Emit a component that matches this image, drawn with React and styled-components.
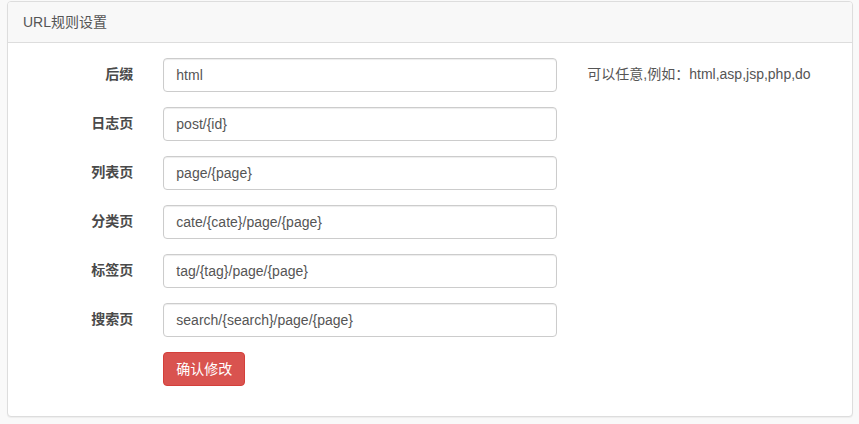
import React from "react";
import styled, { createGlobalStyle } from "styled-components";

const Global = createGlobalStyle`
  html, body { margin: 0; padding: 0; background: #f9f9f9; }
  body {
    font-family: "Liberation Sans", Arial, "Noto Sans CJK SC", sans-serif;
    font-size: 14px;
    line-height: 1.42857;
    color: #333;
  }
  * { box-sizing: border-box; }
`;

const Page = styled.div`
  padding: 1px 6px 7px 7px;
`;

const Panel = styled.div`
  background: #fff;
  border: 1px solid #ddd;
  border-radius: 4px;
  box-shadow: 0 1px 1px rgba(0, 0, 0, 0.05);
`;

const PanelHeading = styled.div`
  padding: 10px 15px;
  background: #f8f8f8;
  border-bottom: 1px solid #ddd;
  border-radius: 3px 3px 0 0;
  color: #555;
  font-size: 14px;
  line-height: 20px;
`;

const PanelBody = styled.div`
  padding: 15px;
`;

const Row = styled.div`
  display: grid;
  grid-template-columns: 2fr 6fr 4fr;
  margin: 0 -18px 15px -16px;
`;

const Label = styled.label`
  padding: 7px 15px 0;
  text-align: right;
  font-weight: bold;
  color: #4a4a4a;
`;

const Cell = styled.div`
  padding: 0 15px;
`;

const Input = styled.input`
  display: block;
  width: 100%;
  height: 34px;
  padding: 6px 12px;
  font-family: inherit;
  font-size: 14px;
  color: #555;
  background: #fff;
  border: 1px solid #ccc;
  border-radius: 4px;
  box-shadow: inset 0 1px 1px rgba(0, 0, 0, 0.075);
  outline: none;
`;

const Help = styled.div`
  padding: 7px 15px 0;
  color: #555;
`;

const Button = styled.button`
  height: 34px;
  padding: 6px 12px;
  font-family: inherit;
  font-size: 14px;
  line-height: 20px;
  color: #fff;
  background: #d9534f;
  border: 1px solid #d43f3a;
  border-radius: 4px;
  cursor: pointer;
`;

const fields = [
  { label: "后缀", value: "html", help: "可以任意,例如：html,asp,jsp,php,do" },
  { label: "日志页", value: "post/{id}" },
  { label: "列表页", value: "page/{page}" },
  { label: "分类页", value: "cate/{cate}/page/{page}" },
  { label: "标签页", value: "tag/{tag}/page/{page}" },
  { label: "搜索页", value: "search/{search}/page/{page}" },
];

export default function App() {
  return (
    <Page>
      <Global />
      <Panel>
        <PanelHeading>URL规则设置</PanelHeading>
        <PanelBody>
          {fields.map((f) => (
            <Row key={f.label}>
              <Label>{f.label}</Label>
              <Cell>
                <Input defaultValue={f.value} />
              </Cell>
              {f.help ? <Help>{f.help}</Help> : <div />}
            </Row>
          ))}
          <Row>
            <div />
            <Cell>
              <Button>确认修改</Button>
            </Cell>
            <div />
          </Row>
        </PanelBody>
      </Panel>
    </Page>
  );
}
